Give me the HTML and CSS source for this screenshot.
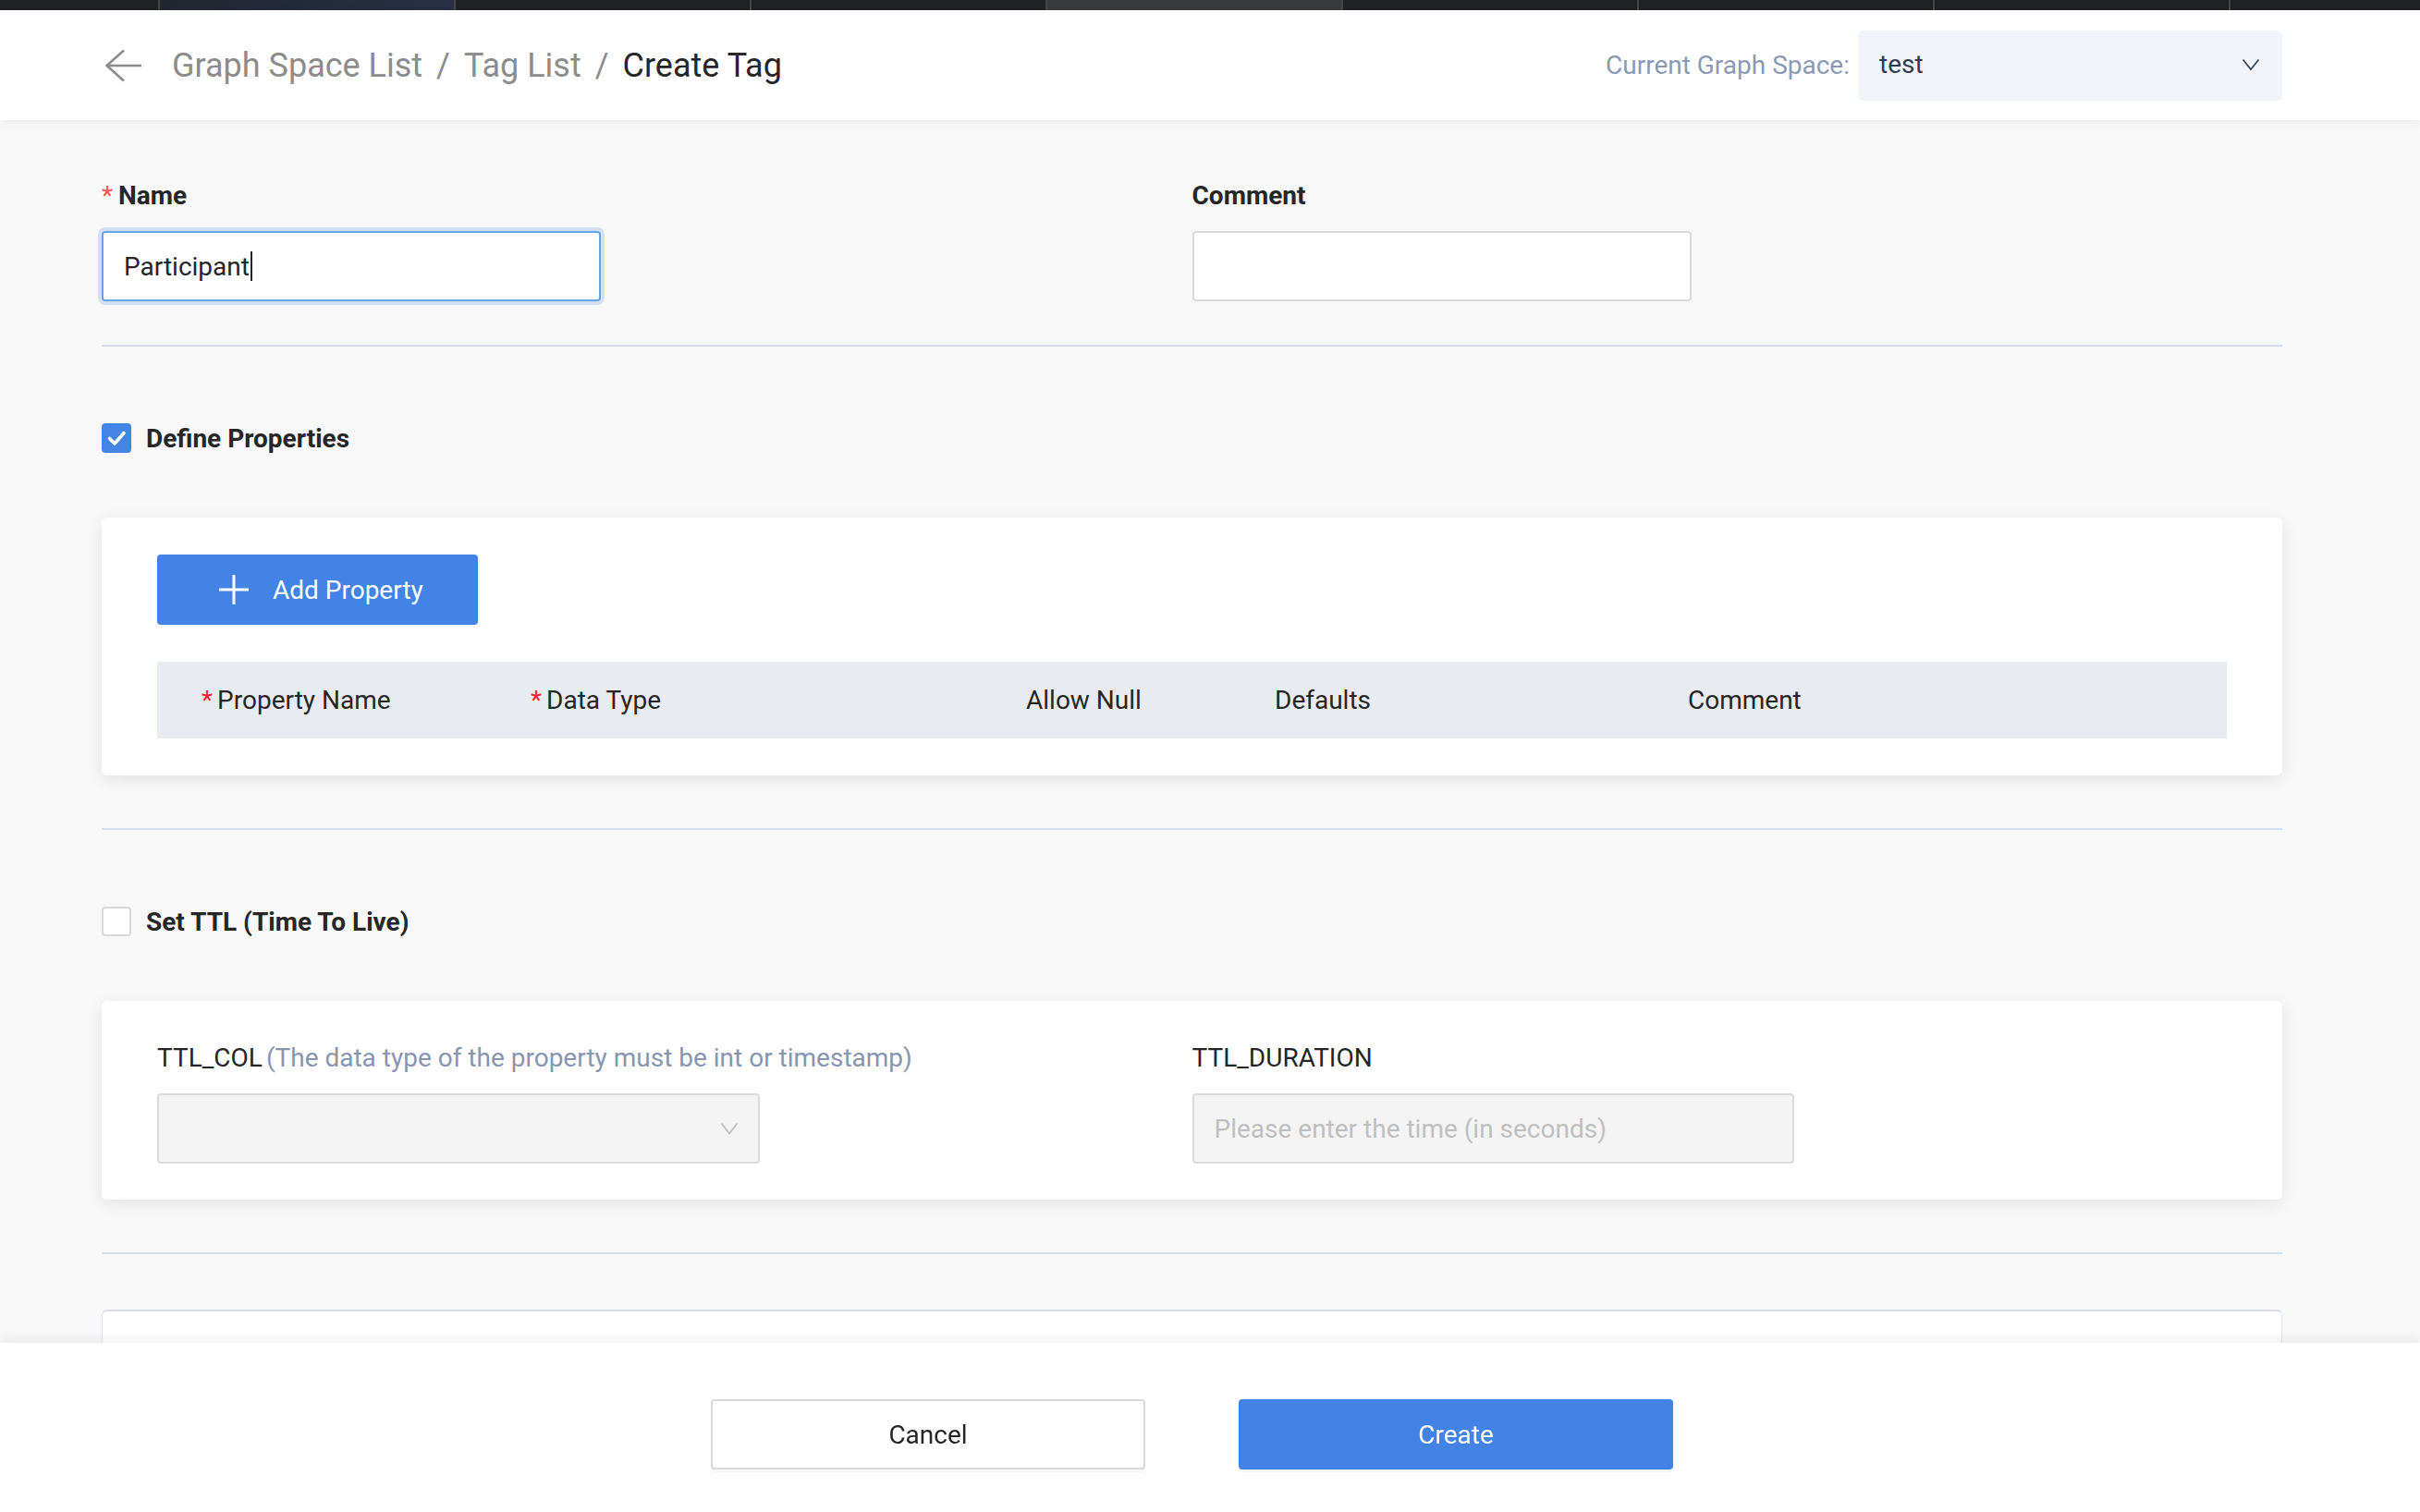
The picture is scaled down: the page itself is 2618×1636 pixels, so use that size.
FILE: index.html
```html
<!DOCTYPE html>
<html lang="en">
<head>
<meta charset="utf-8">
<title>Create Tag</title>
<link rel="stylesheet" href="styles.css">
</head>
<body>
<div class="tabbar">
  <span class="tab tab-first"></span>
  <span class="tab tab-blue"></span>
  <span class="tab"></span>
  <span class="tab"></span>
  <span class="tab tab-active"></span>
  <span class="tab"></span>
  <span class="tab"></span>
  <span class="tab"></span>
  <span class="tab tab-last"></span>
</div>

<header class="topbar">
  <nav class="crumbs">
    <svg class="back" width="40" height="36" viewBox="0 0 40 36"><path d="M21 1.5 L2.5 18 L21 34.5 M2.5 18 H40" fill="none" stroke="#8c8c8c" stroke-width="2.6"/></svg>
    <span class="crumb">Graph Space List</span><span class="sep">/</span><span class="crumb">Tag List</span><span class="sep">/</span><span class="crumb current">Create Tag</span>
  </nav>
  <div class="space">
    <span class="space-label">Current Graph Space:</span>
    <div class="space-select">
      <span class="space-value">test</span>
      <svg width="20" height="14" viewBox="0 0 20 14"><path d="M1.5 1.5 L10 12 L18.5 1.5" fill="none" stroke="#3c4a5e" stroke-width="1.8"/></svg>
    </div>
  </div>
</header>

<main class="content">
  <section class="two-col">
    <div class="field">
      <div class="field-label bold"><span class="req">*</span>Name</div>
      <div class="input focused"><span>Participant</span><span class="caret"></span></div>
    </div>
    <div class="field">
      <div class="field-label bold">Comment</div>
      <div class="input"></div>
    </div>
  </section>

  <hr class="divider first">

  <div class="check-row">
    <span class="checkbox checked"><svg width="32" height="32" viewBox="0 0 32 32"><path d="M8.5 16.5 L14 22 L24 10.5" fill="none" stroke="#fff" stroke-width="3.6" stroke-linecap="round" stroke-linejoin="round"/></svg></span>
    <span class="check-label">Define Properties</span>
  </div>

  <div class="card card-props">
    <button class="btn btn-primary add-btn">
      <svg width="34" height="34" viewBox="0 0 34 34"><path d="M17 1 V33 M1 17 H33" stroke="#fff" stroke-width="3"/></svg>
      <span>Add Property</span>
    </button>
    <div class="table-head">
      <div class="th"><span class="star">*</span>Property Name</div>
      <div class="th"><span class="star">*</span>Data Type</div>
      <div class="th">Allow Null</div>
      <div class="th">Defaults</div>
      <div class="th">Comment</div>
    </div>
  </div>

  <hr class="divider">

  <div class="check-row">
    <span class="checkbox"></span>
    <span class="check-label">Set TTL (Time To Live)</span>
  </div>

  <div class="card card-ttl">
    <div class="two-col">
      <div class="field">
        <div class="field-label">TTL_COL<span class="hint">(The data type of the property must be int or timestamp)</span></div>
        <div class="input disabled select">
          <svg width="20" height="14" viewBox="0 0 20 14"><path d="M1.5 1.5 L10 12.5 L18.5 1.5" fill="none" stroke="#bfbfbf" stroke-width="1.8"/></svg>
        </div>
      </div>
      <div class="field">
        <div class="field-label">TTL_DURATION</div>
        <div class="input disabled duration"><span class="placeholder">Please enter the time (in seconds)</span></div>
      </div>
    </div>
  </div>

  <hr class="divider">

  <div class="card-outline">
    <div class="outline-title">Show Create nGQL</div>
  </div>
</main>

<footer class="footer">
  <button class="btn btn-default">Cancel</button>
  <button class="btn btn-primary">Create</button>
</footer>
</body>
</html>
```

FILE: styles.css
```css
* { box-sizing: border-box; }
html, body { margin: 0; padding: 0; }
body {
  background: #f8f8f8;
  font-family: Roboto, "Liberation Sans", Arial, sans-serif;
  font-size: 28px;
  color: #262626;
  height: 1636px;
  overflow: hidden;
}

/* top dark tab strip */
.tabbar { display: flex; height: 11px; background: #202124; }
.tab { flex: none; width: 320px; height: 100%; border-left: 2px solid #45464a; }
.tab-first { width: 171px; border-left: none; }
.tab-blue { background: linear-gradient(90deg, #21252f, #263042); }
.tab-active { background: #393a3e; }
.tab-last { flex: 1; }

/* header */
.topbar {
  height: 119px;
  background: #fff;
  display: flex;
  align-items: center;
  justify-content: space-between;
  padding: 0 149px 0 113px;
  box-shadow: 0 3px 10px rgba(0, 0, 0, 0.06);
  position: relative;
  z-index: 1;
}
.crumbs { display: flex; align-items: center; }
.back { margin-right: 33px; display: block; }
.crumb { font-size: 36px; color: #8c8c8c; line-height: 44px; }
.crumb.current { color: #262626; }
.sep { font-size: 36px; color: #8c8c8c; margin: 0 15px; line-height: 44px; }

.space { display: flex; align-items: center; }
.space-label { color: #8a9ab3; font-size: 28px; margin-right: 9px; }
.space-select {
  width: 459px;
  height: 76px;
  background: #f1f4f8;
  border-radius: 6px;
  display: flex;
  align-items: center;
  justify-content: space-between;
  padding: 0 24px 2px 23px;
}
.space-value { color: #2f3c50; font-size: 28px; }

/* main */
.content { padding: 62px 149px 0 110px; }
.two-col { display: grid; grid-template-columns: 1fr 1fr; }
.field { display: flex; flex-direction: column; }
.field-label { line-height: 40px; margin-bottom: 18px; font-size: 28px; color: #262626; }
.bold { font-weight: 700; }
.req { color: #f5544d; font-weight: 400; margin-right: 6px; }
.hint { color: #8796b0; margin-left: 4px; }

.input {
  width: 540px;
  height: 76px;
  background: #fff;
  border: 2px solid #d9d9d9;
  border-radius: 4px;
  display: flex;
  align-items: center;
  padding: 0 22px;
  font-size: 28px;
  color: #262626;
}
.input.focused {
  border-color: #6aa2f2;
  box-shadow: 0 0 0 4px rgba(67, 131, 230, 0.2);
}
.caret { display: inline-block; width: 2px; height: 32px; background: #262626; margin-left: 1px; }
.input.disabled { background: #f4f4f4; border-color: #dcdcdc; }
.input.select { width: 652px; justify-content: flex-end; padding-right: 21px; }
.input.duration { width: 651px; }
.placeholder { color: #bfbfbf; }

.divider {
  border: none;
  height: 2px;
  background: #d5deeb;
  margin: 47px 0 0;
}
.divider.first { margin-top: 47px; }
.card + .divider { margin-top: 57px; }

.check-row { display: flex; align-items: center; height: 40px; margin-top: 79px; }
.divider + .check-row { margin-top: 79px; }
.checkbox {
  width: 32px;
  height: 32px;
  border-radius: 4px;
  border: 2px solid #d9d9d9;
  background: #fff;
  margin-right: 16px;
  display: flex;
  align-items: center;
  justify-content: center;
}
.checkbox.checked { background: #4285e6; border: none; }
.check-label { font-weight: 700; font-size: 28px; color: #262626; }

.card {
  background: #fff;
  border-radius: 6px;
  box-shadow: 0 4px 18px rgba(0, 0, 0, 0.09);
  margin-top: 66px;
  padding: 40px 60px;
}
.card-ttl { padding: 42px 60px 39px; }

.btn {
  font-family: Roboto, "Liberation Sans", Arial, sans-serif;
  font-size: 28px;
  height: 76px;
  border-radius: 4px;
  cursor: pointer;
  box-shadow: 0 3px 0 rgba(0, 0, 0, 0.03);
}
.btn-primary { background: #4383e6; color: #fff; border: none; }
.btn-default { background: #fff; color: #262626; border: 2px solid #d9d9d9; }

.add-btn {
  display: flex;
  align-items: center;
  width: 347px;
  padding: 0 0 0 66px;
  gap: 25px;
}
.add-btn svg { display: block; }

.table-head {
  margin-top: 40px;
  height: 83px;
  background: #e8ecf0;
  display: grid;
  grid-template-columns: 356px 536px 269px 447px 1fr;
  align-items: center;
  padding-left: 48px;
}
.th { font-size: 28px; color: #262626; white-space: nowrap; }
.star { color: #f5222d; margin-right: 5px; }

.card-outline {
  margin-top: 60px;
  background: #fff;
  border: 1px solid #e1e6ee;
  border-top: 2px solid #d5deeb;
  border-radius: 6px 6px 0 0;
  height: 300px;
  padding: 30px 26px;
}
.outline-title { color: #8c8c8c; font-size: 28px; line-height: 40px; }

/* footer */
.footer {
  position: fixed;
  left: 0;
  right: 0;
  bottom: 0;
  height: 183px;
  background: #fff;
  display: flex;
  justify-content: center;
  align-items: flex-start;
  gap: 101px;
  padding: 61px 149px 0 110px;
  box-shadow: 0 -5px 12px rgba(0, 0, 0, 0.06);
  z-index: 5;
}
.footer .btn { width: 470px; }
```
